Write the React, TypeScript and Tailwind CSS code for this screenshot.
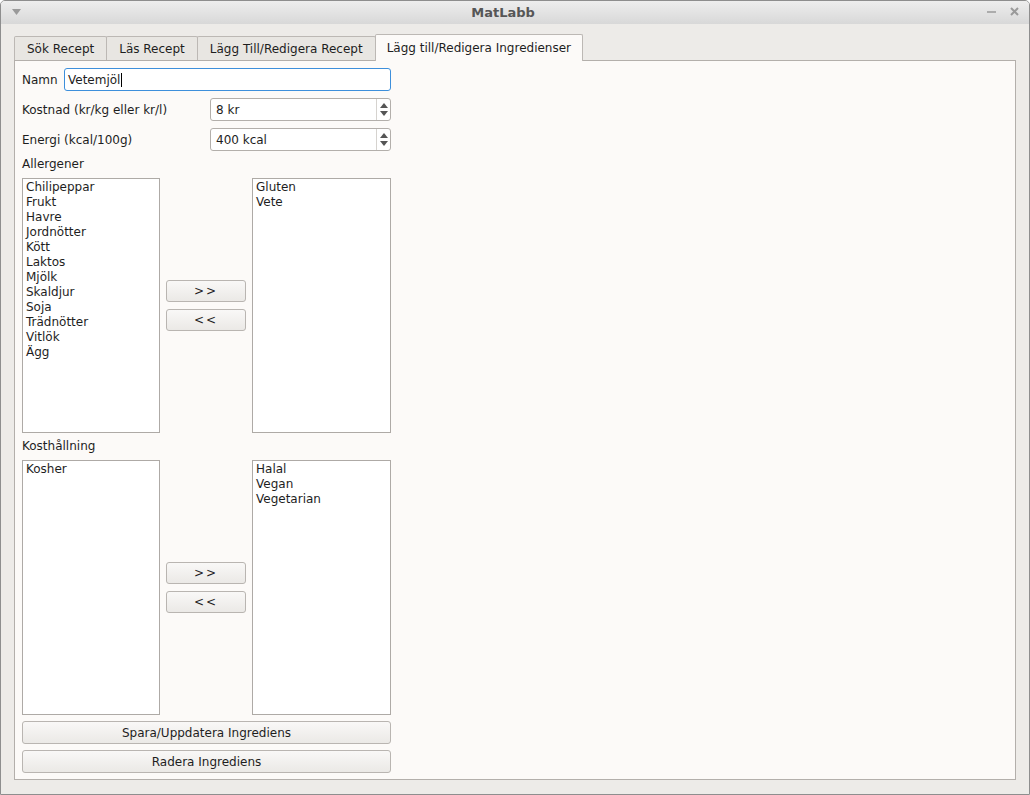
import React from "react";

const font = { fontFamily: '"DejaVu Sans", "Liberation Sans", sans-serif' };

const allergensLeft = ["Chilipeppar", "Frukt", "Havre", "Jordnötter", "Kött", "Laktos", "Mjölk", "Skaldjur", "Soja", "Trädnötter", "Vitlök", "Ägg"];
const allergensRight = ["Gluten", "Vete"];
const dietLeft = ["Kosher"];
const dietRight = ["Halal", "Vegan", "Vegetarian"];

const tabs = ["Sök Recept", "Läs Recept", "Lägg Till/Redigera Recept"];

const Btn = ({ label, className = "" }: { label: string; className?: string }) => (
  <button
    type="button"
    className={`flex items-center justify-center rounded-[3px] border border-[#b9b5b1] bg-gradient-to-b from-[#f9f8f7] to-[#ebe9e6] text-[12px] text-[#1e1e1e] ${className}`}
  >
    {label}
  </button>
);

const ListBox = ({ items, className = "" }: { items: string[]; className?: string }) => (
  <div className={`h-full border border-[#aeaaa6] bg-white px-[3px] pt-[1px] text-[12px] leading-[15px] text-[#1e1e1e] ${className}`}>
    {items.map((i) => (
      <div key={i}>{i}</div>
    ))}
  </div>
);

const SpinBox = ({ value }: { value: string }) => (
  <div className="flex h-[23px] w-[181px] rounded-[3px] border border-[#b3afab] bg-white">
    <div className="flex flex-1 items-center pl-[5px] text-[12px] text-[#1e1e1e]">{value}</div>
    <div className="flex w-[14px] flex-col items-center justify-center gap-[3px] border-l border-[#d6d3cf]">
      <svg width="8" height="5" viewBox="0 0 8 5"><path d="M0 5 L4 0 L8 5 Z" fill="#555" /></svg>
      <svg width="8" height="5" viewBox="0 0 8 5"><path d="M0 0 L4 5 L8 0 Z" fill="#555" /></svg>
    </div>
  </div>
);

const TransferBlock = ({ left, right }: { left: string[]; right: string[] }) => (
  <div className="flex h-[255px] gap-[6px]">
    <ListBox items={left} className="w-[138px]" />
    <div className="flex w-[80px] flex-col justify-center gap-[7px]">
      <Btn label=">>" className="h-[22px] w-full tracking-[2px]" />
      <Btn label="<<" className="h-[22px] w-full tracking-[2px]" />
    </div>
    <ListBox items={right} className="w-[139px]" />
  </div>
);

export default function App() {
  return (
    <div style={font} className="flex h-[795px] w-[1030px] flex-col overflow-hidden rounded-t-[5px] border border-[#8e8e8e] bg-[#edebe8]">
      {/* title bar */}
      <div className="relative flex h-[23px] items-center justify-center bg-gradient-to-b from-[#eeeeee] to-[#d8d8d8]">
        <svg className="absolute left-[11px] top-[8px]" width="9" height="6" viewBox="0 0 9 6">
          <path d="M0 0 L9 0 L4.5 6 Z" fill="#9a9a9a" />
        </svg>
        <span className="mr-[24px] text-[13px] font-bold text-[#565656]">MatLabb</span>
        <div className="absolute right-[10px] top-[6px] flex items-center gap-[14px]">
          <svg width="9" height="9" viewBox="0 0 9 9"><path d="M0 5 H9" stroke="#9a9a9a" strokeWidth="1.6" /></svg>
          <svg width="9" height="9" viewBox="0 0 9 9"><path d="M1 1 L8 8 M8 1 L1 8" stroke="#9a9a9a" strokeWidth="2" /></svg>
        </div>
      </div>

      <div className="flex flex-1 flex-col px-[13px] pb-[14px] pt-[10px]">
        {/* tabs */}
        <div className="relative z-10 flex h-[26px] items-end">
          {tabs.map((t, i) => (
            <div
              key={t}
              className={`flex h-[24px] items-center rounded-t-[2px] border border-b-0 border-[#bcb8b4] bg-[#e8e6e2] px-[12px] text-[12px] text-[#1e1e1e] ${i > 0 ? "-ml-px" : ""}`}
            >
              {t}
            </div>
          ))}
          <div className="-ml-px -mb-px flex h-[27px] items-center rounded-t-[2px] border border-b-0 border-[#bcb8b4] bg-[#fcfaf8] px-[11px] text-[12px] text-[#1e1e1e]">
            Lägg till/Redigera Ingredienser
          </div>
        </div>

        {/* pane */}
        <div className="flex flex-1 flex-col border border-[#b3afab] bg-[#fcfaf8] px-[7px] pt-[7px]">
          <div className="flex w-[369px] flex-col text-[12px] text-[#1e1e1e]">
            <div className="flex h-[23px] items-center">
              <span className="w-[42px]">Namn</span>
              <div className="flex h-[23px] flex-1 items-center rounded-[3px] border border-[#3d8fdb] bg-white pl-[3px]">
                Vetemjöl<span className="ml-px h-[14px] w-px bg-black" />
              </div>
            </div>
            <div className="mt-[7px] flex items-center justify-between">
              <span>Kostnad (kr/kg eller kr/l)</span>
              <SpinBox value="8 kr" />
            </div>
            <div className="mt-[7px] flex items-center justify-between">
              <span>Energi (kcal/100g)</span>
              <SpinBox value="400 kcal" />
            </div>

            <div className="mt-[6px] h-[15px] leading-[15px]">Allergener</div>
            <div className="mt-[6px]">
              <TransferBlock left={allergensLeft} right={allergensRight} />
            </div>

            <div className="mt-[6px] h-[15px] leading-[15px]">Kosthållning</div>
            <div className="mt-[6px]">
              <TransferBlock left={dietLeft} right={dietRight} />
            </div>

            <Btn label="Spara/Uppdatera Ingrediens" className="mt-[6px] h-[23px] w-full" />
            <Btn label="Radera Ingrediens" className="mt-[6px] h-[23px] w-full" />
          </div>
        </div>
      </div>
    </div>
  );
}
